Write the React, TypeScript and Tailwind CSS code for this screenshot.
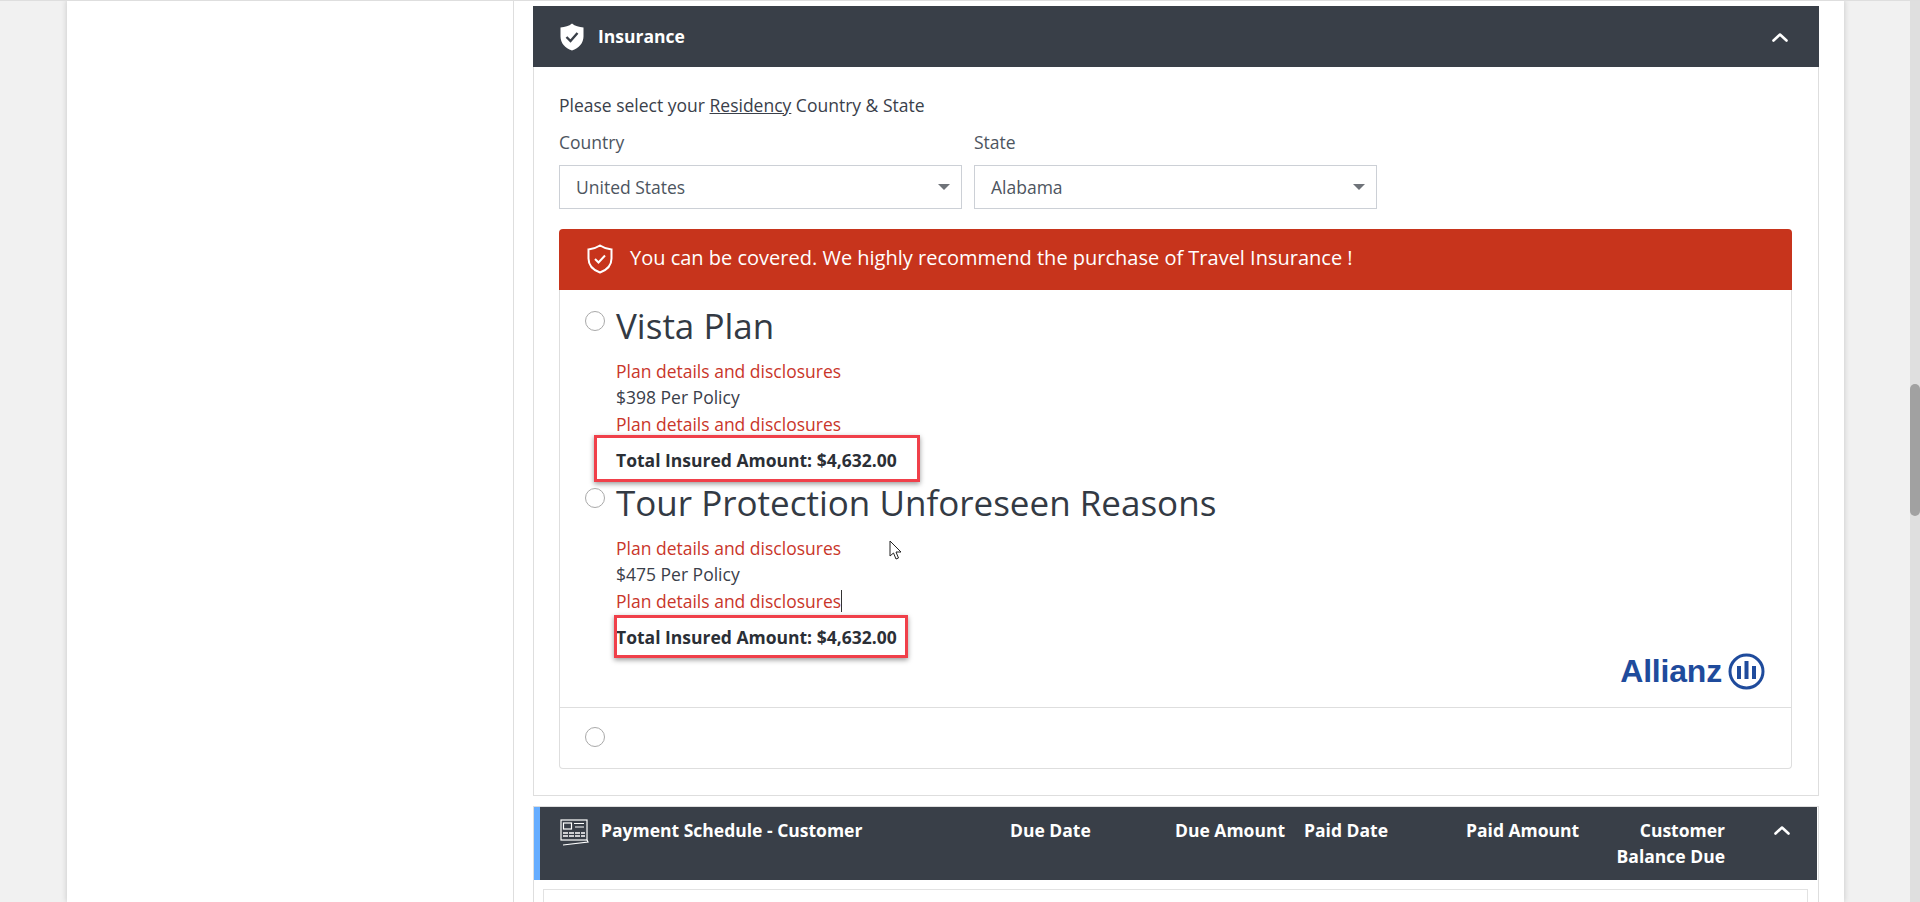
import React from "react";

const Chevron = ({ className = "" }: { className?: string }) => (
  <svg width="18" height="12" viewBox="0 0 18 12" fill="none" className={className}>
    <path d="M2.5 9.5L9 3.5L15.5 9.5" stroke="#fff" strokeWidth="2.6" strokeLinecap="round" strokeLinejoin="round" />
  </svg>
);

const Radio = () => (
  <span className="block h-[20px] w-[20px] shrink-0 rounded-full border border-[#a9a9a9] bg-white" />
);

const Select = ({ value }: { value: string }) => (
  <div className="flex h-[44px] w-[403px] items-center justify-between border border-[#ccd0d6] bg-white pl-[16px] pr-[11px] text-[#4d5560]">
    <span>{value}</span>
    <span className="h-0 w-0 border-x-[6px] border-t-[6px] border-x-transparent border-t-[#6f7379]" />
  </div>
);

const Plan = ({
  name,
  price,
  caret,
  boxClass,
  heightClass,
}: {
  name: string;
  price: string;
  caret?: boolean;
  boxClass: string;
  heightClass: string;
}) => (
  <div className={`relative flex ${heightClass}`}>
    <div className="w-[56px] shrink-0 pl-[25px] pt-[5px]">
      <Radio />
    </div>
    <div>
      <div className="h-[52px] text-[35px] leading-[40px] text-[#333a44]">{name}</div>
      <div className="text-[#c9362a]">Plan details and disclosures</div>
      <div>{price}</div>
      <div className="relative w-fit text-[#c9362a]">
        Plan details and disclosures
        {caret && <span className="absolute right-[-1px] top-[2px] h-[22px] w-px bg-[#333]" />}
      </div>
      <div className="mt-[10px] font-bold text-[#2b2f36]">Total Insured Amount: $4,632.00</div>
    </div>
    <div
      className={`pointer-events-none absolute border-[3px] border-[#f0404a] shadow-[0_2px_5px_rgba(0,0,0,0.4)] ${boxClass}`}
    />
  </div>
);

export default function App() {
  return (
    <div
      className="relative flex h-[902px] overflow-hidden bg-[#f1f1f1] text-[17.5px] leading-[26.4px] text-[#3a404a]"
      style={{ fontFamily: '"Open Sans", "Noto Sans", sans-serif' }}
    >
      <div className="absolute inset-x-0 top-0 z-10 h-px bg-[#dedede]" />
      <div className="ml-[67px] flex h-full w-[1777px] bg-white shadow-[0_0_6px_rgba(0,0,0,0.18)]">
        <div className="h-full w-[447px] shrink-0 border-r border-[#dedede]" />
        <div className="ml-[19px] w-[1286px] pt-[6px]">
          <section className="h-[790px] border-x border-b border-[#dedede]">
            <header className="-mx-px flex h-[61px] items-center bg-[#393f48] pl-[27px] pr-[30px] font-bold text-white">
              <svg width="24" height="28" viewBox="0 0 24 28" className="mr-[14px]">
                <path d="M12 0.5C15 3 19 4.2 23.5 4.5V13.5C23.5 20 19 25 12 27.5C5 25 0.5 20 0.5 13.5V4.5C5 4.2 9 3 12 0.5Z" fill="#fff" />
                <path d="M6.5 14L10.5 18L17.5 10" stroke="#393f48" strokeWidth="2.4" fill="none" />
              </svg>
              <span>Insurance</span>
              <Chevron className="ml-auto" />
            </header>
            <div className="pl-[25px] pr-[26px] pt-[25px]">
              <p>
                Please select your <u>Residency</u> Country &amp; State
              </p>
              <div className="mt-[11px] flex gap-[12px]">
                <div>
                  <div className="mb-[9px] text-[#4d5560]">Country</div>
                  <Select value="United States" />
                </div>
                <div>
                  <div className="mb-[9px] text-[#4d5560]">State</div>
                  <Select value="Alabama" />
                </div>
              </div>
              <div className="mt-[20px] flex h-[61px] items-center rounded-t-[4px] bg-[#c7341c] pb-[2px] pl-[28px] text-[20px] text-white">
                <svg width="26" height="30" viewBox="0 0 26 30" fill="none" className="mr-[17px] mt-[2px]">
                  <path d="M13 1.5C16 3.5 20 5 24.5 5.5V14.5C24.5 21 20 26 13 28.5C6 26 1.5 21 1.5 14.5V5.5C6 5 10 3.5 13 1.5Z" stroke="#fff" strokeWidth="2" />
                  <path d="M8 15L11.5 18.5L18 11.5" stroke="#fff" strokeWidth="2" />
                </svg>
                <span>You can be covered. We highly recommend the purchase of Travel Insurance !</span>
              </div>
              <div className="h-[479px] rounded-b-[4px] border-x border-b border-[#dedede]">
                <div className="relative h-[418px] border-b border-[#dedede] pt-[16px]">
                  <Plan
                    heightClass="h-[177px]"
                    name="Vista Plan"
                    price="$398 Per Policy"
                    boxClass="left-[34px] top-[129px] h-[47px] w-[326px]"
                  />
                  <Plan
                    heightClass="h-[176px]"
                    name="Tour Protection Unforeseen Reasons"
                    price="$475 Per Policy"
                    caret
                    boxClass="left-[54px] top-[132px] h-[43px] w-[294px]"
                  />
                  <div className="absolute right-[26px] top-[363px] flex items-center gap-[6px]">
                    <span
                      className="text-[32px] font-bold leading-[36px] tracking-[-0.2px] text-[#1f4b9c]"
                      style={{ fontFamily: '"Liberation Sans", sans-serif' }}
                    >
                      Allianz
                    </span>
                    <svg width="37" height="37" viewBox="0 0 37 37" fill="none">
                      <circle cx="18.5" cy="18.5" r="16.5" stroke="#1f4b9c" strokeWidth="3" />
                      <path d="M9 13H13V26H9ZM16.5 8H20.5V26H16.5ZM24 13H28V26H24Z" fill="#1f4b9c" />
                    </svg>
                  </div>
                </div>
                <div className="pl-[25px] pt-[19px]">
                  <Radio />
                </div>
              </div>
            </div>
          </section>
          <section className="mt-[10px] border-x border-t border-[#dedede]">
            <header className="mr-px flex h-[73px] border-l-[6px] border-[#66adff] bg-[#393f48] pt-[10px] font-bold whitespace-nowrap text-white">
              <div className="ml-[20px] flex h-[30px] w-[450px] items-start">
                <svg width="30" height="28" viewBox="0 0 30 28" fill="none" stroke="#fff" className="mr-[11px] mt-[2px] shrink-0">
                  <rect x="1" y="1" width="26" height="20" strokeWidth="1.2" />
                  <rect x="3.5" y="4" width="8" height="6" strokeWidth="1.2" />
                  <path d="M14 4.5H24M15 8H24" strokeWidth="1.2" />
                  <path d="M3 14H25M3 17H25" strokeWidth="1.4" strokeDasharray="5 1" />
                  <path d="M3 26L28 23L27 21" strokeWidth="1.2" />
                </svg>
                <span>Payment Schedule - Customer</span>
              </div>
              <div className="w-[165px]">Due Date</div>
              <div className="w-[129px]">Due Amount</div>
              <div className="w-[162px]">Paid Date</div>
              <div className="w-[113px]">Paid Amount</div>
              <div className="w-[146px] text-right">
                Customer
                <br />
                Balance Due
              </div>
              <Chevron className="ml-[48px] mt-[7px]" />
            </header>
            <div className="ml-[9px] mr-[10px] mt-[9px] h-[40px] border border-[#e2e2e2]" />
          </section>
        </div>
      </div>
      <div className="absolute bottom-0 right-0 top-px w-[10px] bg-[#dfdfdf]">
        <div className="absolute top-[383px] h-[132px] w-[10px] rounded-[5px] bg-[#a1a1a1]" />
      </div>
      <svg width="14" height="22" viewBox="0 0 14 22" className="absolute left-[889px] top-[540px]" fill="#fff" stroke="#222" strokeWidth="1">
        <path d="M1 1V16L4.5 13L7 19L9.5 18L7 12H12Z" />
      </svg>
    </div>
  );
}
